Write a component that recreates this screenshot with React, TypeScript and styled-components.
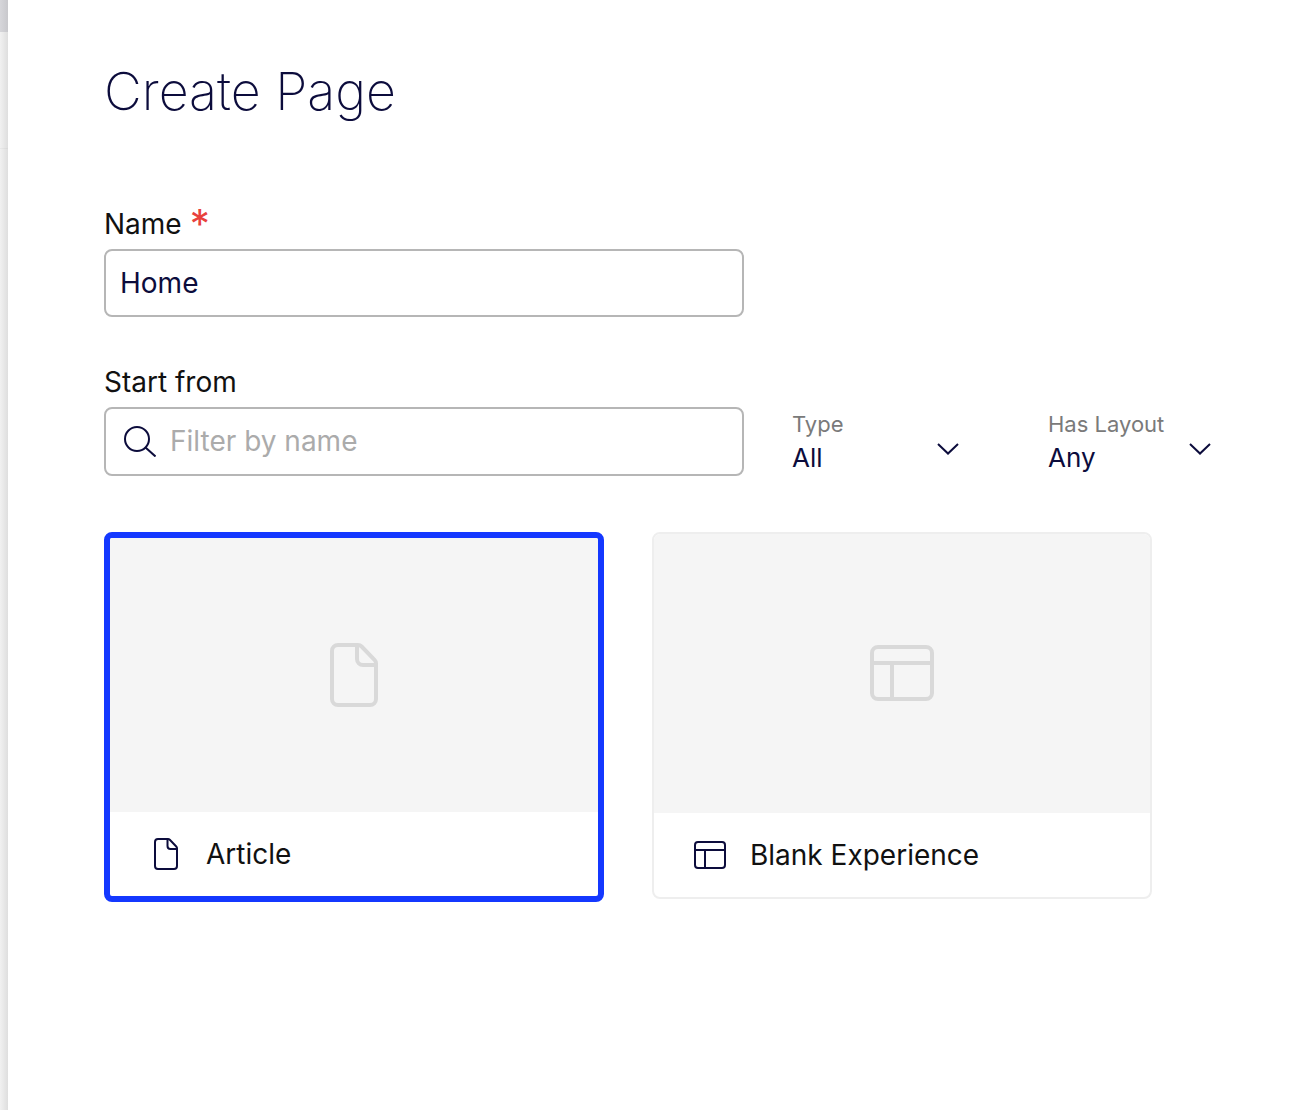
import React from 'react';
import styled, { createGlobalStyle } from 'styled-components';

const navy = '#0c0c3c';

const GlobalStyle = createGlobalStyle`
  html,
  body {
    margin: 0;
    padding: 0;
    background: #fff;
    font-family: Inter, "Liberation Sans", sans-serif;
  }
`;

const Screen = styled.div`
  display: flex;
  width: 1310px;
  height: 1110px;
  overflow: hidden;
  background: #fff;
`;

const Backdrop = styled.div`
  flex: 0 0 8px;
  display: flex;
  flex-direction: column;
  background: linear-gradient(to right, #f1f1f1, #dedede);
`;

const BackdropTab = styled.div`
  height: 32px;
  background: linear-gradient(to right, #d6d6da, #c8c8cc);
`;

const BackdropRow = styled.div`
  height: 116px;
  border-bottom: 1px solid rgba(0, 0, 0, 0.03);
`;

const Panel = styled.main`
  flex: 1;
  padding: 60px 0 0 96px;
`;

const Title = styled.h1`
  margin: 0 0 83px;
  height: 64px;
  font-size: 52px;
  line-height: 64px;
  font-weight: 200;
  color: ${navy};
`;

const Field = styled.div`
  margin-bottom: 48px;
`;

const Label = styled.label`
  display: block;
  height: 34px;
  margin-bottom: 8px;
  font-size: 28px;
  line-height: 34px;
  color: #111;
`;

const Required = styled.span`
  margin-left: 8px;
  color: #e8413c;
  font-size: 40px;
  line-height: 28px;
  vertical-align: -4px;
`;

const InputBox = styled.div<{ $inset: number; $height: number }>`
  box-sizing: border-box;
  display: flex;
  align-items: center;
  gap: 14px;
  width: 640px;
  height: ${(p) => p.$height}px;
  padding: 0 14px 0 ${(p) => p.$inset}px;
  border: 2px solid #b6b6b6;
  border-radius: 8px;
  font-size: 28px;
  color: ${navy};
`;

const Placeholder = styled.span`
  margin-top: -1px;
  color: #ababab;
`;

const FilterRow = styled.div`
  display: flex;
  align-items: center;
`;

const Dropdowns = styled.div`
  display: flex;
  gap: 88px;
  margin-left: 48px;
`;

const Dropdown = styled.div<{ $width: number }>`
  display: flex;
  align-items: center;
  justify-content: space-between;
  width: ${(p) => p.$width}px;

  svg {
    margin-top: 14px;
  }
`;

const DropdownText = styled.div`
  display: flex;
  flex-direction: column;
`;

const DropdownLabel = styled.span`
  font-size: 22px;
  line-height: 32px;
  color: #7a7a7a;
`;

const DropdownValue = styled.span`
  font-size: 26px;
  line-height: 36px;
  color: ${navy};
`;

const Cards = styled.div`
  display: flex;
  align-items: flex-start;
  gap: 48px;
  margin-top: 56px;
`;

const Card = styled.div<{ $selected?: boolean }>`
  box-sizing: border-box;
  display: flex;
  flex-direction: column;
  width: 500px;
  height: ${(p) => (p.$selected ? 370 : 367)}px;
  border: ${(p) => (p.$selected ? '6px solid #1438ff' : '2px solid #eeeeee')};
  border-radius: 8px;
  overflow: hidden;
`;

const Preview = styled.div<{ $lift?: number }>`
  flex: 1;
  display: flex;
  align-items: center;
  justify-content: center;
  padding-bottom: ${(p) => p.$lift ?? 0}px;
  background: #f5f5f5;
`;

const Footer = styled.div<{ $selected?: boolean }>`
  display: flex;
  align-items: center;
  gap: ${(p) => (p.$selected ? 28 : 24)}px;
  height: 84px;
  padding-left: ${(p) => (p.$selected ? 44 : 40)}px;
  font-size: 28px;
  color: #111;
`;

const FileIcon = ({ size, color, sw }: { size: number; color: string; sw: number }) => (
  <svg width={size} height={(size * 64) / 48} viewBox="0 0 48 64" fill="none" stroke={color} strokeWidth={sw} strokeLinejoin="round">
    <path d="M8 2h20c1.5 0 2.6.5 3.6 1.5l12.9 13.4c1 1 1.5 2.2 1.5 3.6V56a6 6 0 0 1-6 6H8a6 6 0 0 1-6-6V8a6 6 0 0 1 6-6z" />
    <path d="M27 2v14a6 6 0 0 0 6 6h13" />
  </svg>
);

const LayoutIcon = ({ width, color, sw }: { width: number; color: string; sw: number }) => (
  <svg width={width} height={(width * 56) / 64} viewBox="0 0 64 56" fill="none" stroke={color} strokeWidth={sw} strokeLinejoin="round">
    <rect x="2" y="2" width="60" height="52" rx="6" />
    <path d="M2 18h60M22 18v36" />
  </svg>
);

const Chevron = () => (
  <svg width="24" height="12" viewBox="0 0 24 12" fill="none" stroke={navy} strokeWidth="2">
    <path d="M2 1l10 9.5L22 1" />
  </svg>
);

const SearchIcon = () => (
  <svg width="32" height="31" viewBox="0 0 32 31" fill="none" stroke={navy} strokeWidth="2">
    <circle cx="13" cy="13" r="12" />
    <path d="M21.5 21.5L31.5 30.5" />
  </svg>
);

export default function App() {
  return (
    <Screen>
      <GlobalStyle />
      <Backdrop>
        <BackdropTab />
        <BackdropRow />
      </Backdrop>
      <Panel>
        <Title>Create Page</Title>
        <Field>
          <Label>
            Name<Required>*</Required>
          </Label>
          <InputBox $inset={14} $height={68}>Home</InputBox>
        </Field>
        <Label>Start from</Label>
        <FilterRow>
          <InputBox $inset={18} $height={69}>
            <SearchIcon />
            <Placeholder>Filter by name</Placeholder>
          </InputBox>
          <Dropdowns>
            <Dropdown $width={168}>
              <DropdownText>
                <DropdownLabel>Type</DropdownLabel>
                <DropdownValue>All</DropdownValue>
              </DropdownText>
              <Chevron />
            </Dropdown>
            <Dropdown $width={164}>
              <DropdownText>
                <DropdownLabel>Has Layout</DropdownLabel>
                <DropdownValue>Any</DropdownValue>
              </DropdownText>
              <Chevron />
            </Dropdown>
          </Dropdowns>
        </FilterRow>
        <Cards>
          <Card $selected>
            <Preview>
              <FileIcon size={48} color="#d9d9d9" sw={4} />
            </Preview>
            <Footer $selected>
              <FileIcon size={24} color={navy} sw={4} />
              Article
            </Footer>
          </Card>
          <Card>
            <Preview $lift={1}>
              <LayoutIcon width={64} color="#d9d9d9" sw={4} />
            </Preview>
            <Footer>
              <LayoutIcon width={32} color={navy} sw={4} />
              Blank Experience
            </Footer>
          </Card>
        </Cards>
      </Panel>
    </Screen>
  );
}
